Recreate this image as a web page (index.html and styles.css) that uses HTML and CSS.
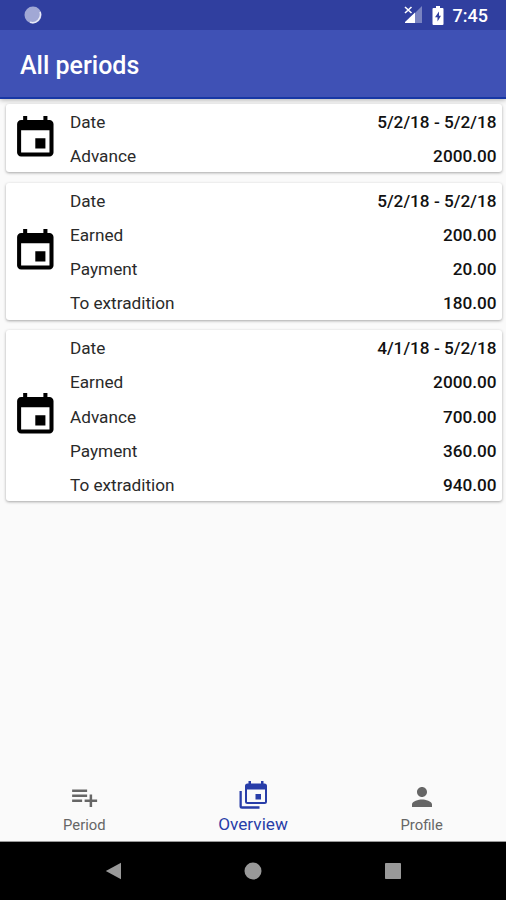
FILE: index.html
```html
<!DOCTYPE html>
<html lang="en">
<head>
<meta charset="utf-8">
<title>All periods</title>
<link rel="stylesheet" href="styles.css">
</head>
<body>
<svg class="defs" aria-hidden="true">
  <symbol id="event" viewBox="0 0 24 24"><path d="M17 12h-5v5h5v-5zM16 1v2H8V1H6v2H5c-1.110 0-1.990.9-1.990 2L3 19c0 1.100.89 2 2 2h14c1.100 0 2-.9 2-2V5c0-1.100-.9-2-2-2h-1V1h-2zm3 18H5V8h14v11z"/></symbol>
</svg>
<header>
  <div class="status">
    <svg class="spinner" viewBox="0 0 18 18"><circle cx="9" cy="9" r="8.500" fill="#a1a8d5"/><path d="M16 6A8 8 0 0 1 6 16.200" fill="none" stroke="#e9ebf8" stroke-width="1.500"/></svg>
    <div class="status-right">
      <svg class="signal" viewBox="0 0 18 18"><path d="M18 0v17H1z" fill="#7983c1"/><path d="M11 6.500V17H1v-1z" fill="#fff"/><path d="M1 1l6 7M7 1l-6 7" stroke="#303f9f" stroke-width="3"/><path d="M1 1l6.500 6M7.500 1l-6.500 6" stroke="#fff" stroke-width="1.600"/></svg>
      <svg class="battery" viewBox="0 0 12 19"><path d="M4 0h4v2h2.500q1 0 1 1v15q0 1-1 1h-9q-1 0-1-1V3q0-1 1-1H4z" fill="#fff"/><path d="M7 5.500L3 11.200h2.500V15.500L9 9.800H7z" fill="#303f9f"/></svg>
      <span>7:45</span>
    </div>
  </div>
  <div class="appbar"><h1>All periods</h1></div>
</header>
<main>
  <section class="card">
    <svg class="icon"><use href="#event"/></svg>
    <dl>
      <div><dt>Date</dt><dd>5/2/18 - 5/2/18</dd></div>
      <div><dt>Advance</dt><dd>2000.00</dd></div>
    </dl>
  </section>
  <section class="card">
    <svg class="icon"><use href="#event"/></svg>
    <dl>
      <div><dt>Date</dt><dd>5/2/18 - 5/2/18</dd></div>
      <div><dt>Earned</dt><dd>200.00</dd></div>
      <div><dt>Payment</dt><dd>20.00</dd></div>
      <div><dt>To extradition</dt><dd>180.00</dd></div>
    </dl>
  </section>
  <section class="card">
    <svg class="icon"><use href="#event"/></svg>
    <dl>
      <div><dt>Date</dt><dd>4/1/18 - 5/2/18</dd></div>
      <div><dt>Earned</dt><dd>2000.00</dd></div>
      <div><dt>Advance</dt><dd>700.00</dd></div>
      <div><dt>Payment</dt><dd>360.00</dd></div>
      <div><dt>To extradition</dt><dd>940.00</dd></div>
    </dl>
  </section>
</main>
<nav class="tabs">
  <a class="tab"><svg viewBox="-.5 0 24 24"><path d="M14 10H2v2h12v-2zm0-4H2v2h12V6zm4 8v-4h-2v4h-4v2h4v4h2v-4h4v-2h-4zM2 16h8v-2H2v2z"/></svg><span>Period</span></a>
  <a class="tab active"><svg viewBox="0.500 0 30 30"><path d="M23.500 14h-5.500v5.500h5.500zM23.500 1v2.500h-10V1H11v2.500h-1q-2.500 0-2.500 2.500v15.500q0 2.500 2.500 2.500h17q2.500 0 2.500-2.500V6q0-2.500-2.500-2.500h-1V1zM27.500 22h-18V9.500h18z"/><path d="M2 11h2.300v15.200H22v2.500H4.500Q2 28.700 2 26.200z"/></svg><span>Overview</span></a>
  <a class="tab"><svg viewBox="0 0 24 24"><path d="M12 12c2.210 0 4-1.790 4-4s-1.790-4-4-4-4 1.790-4 4 1.790 4 4 4zm0 2c-2.670 0-8 1.340-8 4v2h16v-2c0-2.660-5.330-4-8-4z"/></svg><span>Profile</span></a>
</nav>
<footer>
  <svg viewBox="0 0 18 18"><path d="M1.800 9L17 .8v16.400z"/></svg>
  <svg viewBox="0 0 18 18"><circle cx="9" cy="9" r="8.500"/></svg>
  <svg viewBox="0 0 18 18"><rect x="1" y="1" width="16" height="16" rx=".8"/></svg>
</footer>
</body>
</html>
```

FILE: styles.css
```css
* { box-sizing: border-box; }
body {
  margin: 0;
  width: 506px;
  height: 900px;
  display: flex;
  flex-direction: column;
  overflow: hidden;
  background: #fafafa;
  color: #111;
  font-family: Roboto, "Liberation Sans", sans-serif;
}
.defs { display: none; }
header { box-shadow: 0 1px 5px rgba(0, 0, 0, .3); }
.status {
  height: 30px;
  padding: 0 18px 0 24px;
  display: flex;
  align-items: center;
  justify-content: space-between;
  background: #303f9f;
  color: #fff;
}
.spinner { width: 18px; height: 18px; }
.status-right { display: flex; align-items: center; font-size: 18px; font-weight: 500; line-height: 30px; }
.status-right span { margin-top: 2px; }
.signal { width: 18px; height: 18px; margin-right: 10px; }
.battery { width: 12px; height: 19px; margin-right: 9px; }
.appbar {
  height: 69px;
  padding: 4px 20px 0;
  display: flex;
  align-items: center;
  background: #3f51b5;
  border-bottom: 2px solid #1737a5;
}
h1 { margin: 0; color: #fff; font-size: 25px; font-weight: 500; line-height: 30px; }
main {
  flex: 1;
  padding: 5px 4px 0 6px;
  display: flex;
  flex-direction: column;
  gap: 10.500px;
}
.card {
  display: flex;
  align-items: center;
  padding: 0 5.500px 0 5px;
  border-radius: 3px;
  background: #fff;
  box-shadow: 0 1px 3px rgba(0, 0, 0, .34);
}
.icon { width: 48.600px; height: 48.600px; margin-right: 10.400px; fill: #000; }
dl { flex: 1; margin: 0; }
dl div { display: flex; justify-content: space-between; height: 34.200px; line-height: 36px; font-size: 17.200px; }
dt { font-weight: 400; color: #2a2a2a; }
dd { margin: 0; font-weight: 500; }
.tabs { height: 72px; display: flex; border-bottom: 1px solid #999; }
.tab {
  flex: 1;
  display: flex;
  flex-direction: column;
  align-items: center;
  padding-top: 12px;
  color: #666;
  font-size: 14.800px;
  line-height: 20px;
}
.tab svg { width: 30px; height: 30px; margin-bottom: 3px; fill: currentColor; }
.tab.active { padding-top: 10px; color: #283da8; font-size: 17.200px; }
.tab.active svg { margin-bottom: 4px; }
footer {
  height: 58px;
  display: flex;
  justify-content: center;
  align-items: center;
  gap: 122px;
  background: #000;
}
footer svg { width: 18px; height: 18px; fill: #999; }
```
